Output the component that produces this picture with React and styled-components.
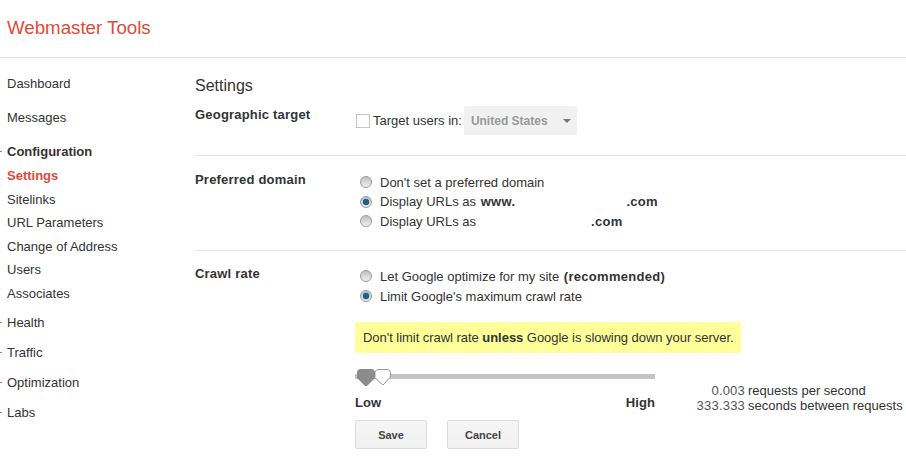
import React from "react";
import styled, { createGlobalStyle } from "styled-components";

const Global = createGlobalStyle`
  html, body { margin: 0; padding: 0; background: #fff; }
  body { font-family: "Liberation Sans", Arial, sans-serif; font-size: 13px; color: #333; width: 906px; height: 458px; overflow: hidden; }
`;
const Header = styled.header`
  height: 57px; border-bottom: 1px solid #e5e5e5; display: flex; align-items: center; padding-left: 7px; box-sizing: content-box;
`;
const Logo = styled.h1`
  margin: 0; font-size: 18.7px; font-weight: 400; color: #dd4b39; line-height: 24px; position: relative; top: -1px;
`;
const Body = styled.div` display: flex; `;
const Side = styled.nav` width: 195px; flex: none; padding: 16px 0 0 7px; box-sizing: border-box; position: relative; `;
const Item = styled.div`
  height: ${p => p.$h}px; line-height: 20px; color: ${p => p.$active ? "#dd4b39" : "#333"};
  font-weight: ${p => p.$bold ? 700 : 400}; position: relative;
  ${p => p.$collapsed ? `&::before { content: ""; position: absolute; left: -7px; top: 9px; width: 2px; height: 1px; background: #888; }` : ""}
`;
const Main = styled.main` flex: 1; min-width: 0; padding-top: 18px; `;
const Title = styled.h2` margin: 0; font-size: 16px; font-weight: 400; line-height: 20px; color: #333; `;
const Section = styled.section`
  display: flex; height: ${p => p.$h}px; padding-top: ${p => p.$pt}px; box-sizing: border-box;
  border-bottom: ${p => p.$line ? "1px solid #e5e5e5" : "none"};
`;
const Label = styled.div` width: 160px; flex: none; font-weight: 700; line-height: 16px; letter-spacing: .2px; `;
const Content = styled.div` flex: 1; min-width: 0; `;
const TargetRow = styled.div` display: flex; align-items: center; height: 29px; margin-top: -1px; `;
const Check = styled.span` width: 12px; height: 12px; border: 1px solid #c6c6c6; margin: 0 3px 0 1px; `;
const Muted = styled.span` margin-right: 2px; `;
const Select = styled.div`
  width: 113px; height: 29px; background: #f1f1f1; border-radius: 2px; color: #999; font-weight: 700; font-size: 12px;
  display: flex; align-items: center; justify-content: space-between; padding: 0 6px 0 7px; box-sizing: border-box;
`;
const Caret = styled.span` width: 0; height: 0; border: 4px solid transparent; border-top-color: #777; border-bottom: 0; `;
const Radios = styled.div` padding-left: 5px; `;
const Radio = styled.label` display: flex; align-items: center; height: ${p => p.$h || 20}px; `;
const Strong = styled.b` letter-spacing: .3px; margin-left: ${p => p.$gap ?? 1}px; `;
const RadioDot = styled.svg` width: 12px; height: 12px; margin-right: 8px; flex: none; `;
const Notice = styled.div`
  width: 386px; height: 31px; margin-top: 16px; background: #ffff99; line-height: 31px; padding-left: 8px; box-sizing: border-box; letter-spacing: -.04px;
`;
const SliderRow = styled.div` display: flex; margin-top: 20px; `;
const SliderCol = styled.div` width: 300px; flex: none; `;
const Track = styled.div` position: relative; height: 5px; margin-top: 1px; background: #c4c4c4; `;
const Thumbs = styled.svg` position: absolute; left: 2px; top: -5px; `;
const Ends = styled.div` display: flex; justify-content: space-between; font-weight: 700; margin-top: 16px; line-height: 16px; letter-spacing: .1px; `;
const Rates = styled.div` margin: 10px 0 0 41px; display: grid; grid-template-columns: 49px auto; align-content: start; column-gap: 3px; line-height: 15px; white-space: nowrap; `;
const Num = styled.span` text-align: right; color: #555; letter-spacing: .2px; `;
const Buttons = styled.div` display: flex; gap: 20px; margin-top: 9px; `;
const Btn = styled.button`
  width: 72px; height: 29px; font: 700 11px "Liberation Sans", Arial, sans-serif; color: #444; padding: 0;
  background: linear-gradient(#f5f5f5, #f1f1f1); border: 1px solid #dcdcdc; border-radius: 2px;
`;

const Dot = ({ on }) => (
  <RadioDot viewBox="0 0 12 12">
    <defs><linearGradient id={on ? "ga" : "gb"} x1="0" y1="0" x2="0" y2="1"><stop offset="0" stopColor="#bdbdbd" /><stop offset="1" stopColor="#f2f2f2" /></linearGradient></defs>
    <circle cx="6" cy="6" r="5.5" fill={`url(#${on ? "ga" : "gb"})`} stroke="#9a9a9a" />
    {on && <circle cx="6" cy="6" r="3.2" fill="#1d5f8f" />}
  </RadioDot>
);

const items = [
  ["Dashboard", 34], ["Messages", 34], ["Configuration", 24, "b"], ["Settings", 24, "a"], ["Sitelinks", 23], ["URL Parameters", 24],
  ["Change of Address", 23], ["Users", 24], ["Associates", 29], ["Health", 30, "c"], ["Traffic", 30, "c"], ["Optimization", 30, "c"], ["Labs", 30, "c"],
];

export default function App() {
  return (
    <>
      <Global />
      <Header><Logo>Webmaster Tools</Logo></Header>
      <Body>
        <Side>
          {items.map(([t, h, k]) => (
            <Item key={t} $h={h} $bold={k === "b" || k === "a"} $active={k === "a"} $collapsed={k === "c" || k === "b"}>{t}</Item>
          ))}
        </Side>
        <Main>
          <Title>Settings</Title>
          <Section $h={60} $pt={11} $line>
            <Label>Geographic target</Label>
            <Content>
              <TargetRow>
                <Check /><Muted>Target users in:</Muted>
                <Select>United States<Caret /></Select>
              </TargetRow>
            </Content>
          </Section>
          <Section $h={95} $pt={16} $line>
            <Label>Preferred domain</Label>
            <Content>
              <Radios>
                <Radio><Dot />Don't set a preferred domain</Radio>
                <Radio $h={19.5}><Dot on /><span>Display URLs as <Strong>www.</Strong></span><Strong $gap={111}>.com</Strong></Radio>
                <Radio $h={19.5}><Dot /><span>Display URLs as</span><Strong $gap={115}>.com</Strong></Radio>
              </Radios>
            </Content>
          </Section>
          <Section $h={200} $pt={15}>
            <Label>Crawl rate</Label>
            <Content>
              <Radios>
                <Radio><Dot /><span>Let Google optimize for my site <Strong>(recommended)</Strong></span></Radio>
                <Radio><Dot on />Limit Google's maximum crawl rate</Radio>
              </Radios>
              <Notice>Don't limit crawl rate <b>unless</b> Google is slowing down your server.</Notice>
              <SliderRow>
                <SliderCol>
                  <Track>
                    <Thumbs width="36" height="18" viewBox="0 0 36 18">
                      <path d="M18 3 Q19 0.5 21 0.5 H30 Q33.5 0.5 33.5 4 V8 L26 16 L18 9 Z" fill="#fff" stroke="#999" />
                      <path d="M0 4 Q0 0 4 0 H14 Q18 0 18 4 V9 L10 17 H8 L0 9 Z" fill="#8c8c8c" />
                    </Thumbs>
                  </Track>
                  <Ends><span>Low</span><span>High</span></Ends>
                  <Buttons><Btn>Save</Btn><Btn>Cancel</Btn></Buttons>
                </SliderCol>
                <Rates>
                  <Num>0.003</Num><span>requests per second</span>
                  <Num>333.333</Num><span>seconds between requests</span>
                </Rates>
              </SliderRow>
            </Content>
          </Section>
        </Main>
      </Body>
    </>
  );
}
